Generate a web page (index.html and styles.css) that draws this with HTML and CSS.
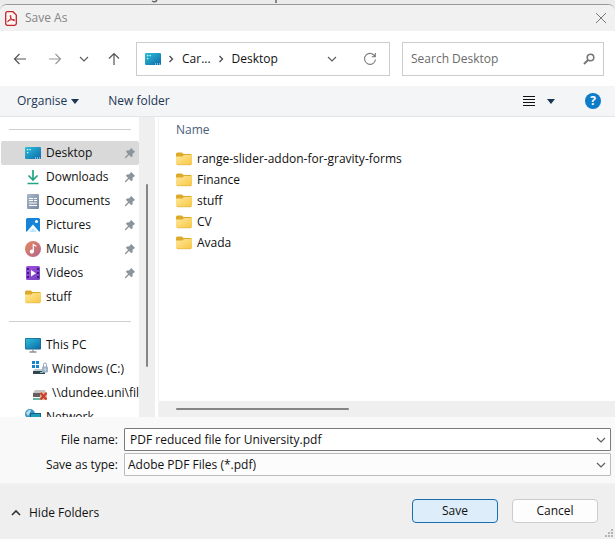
FILE: index.html
```
<!DOCTYPE html>
<html lang="en">
<head>
    <meta charset="UTF-8">
    <meta name="viewport" content="width=device-width, initial-scale=1.0">
    <title>Save As</title>
    <link rel="stylesheet" href="styles.css">
</head>
<body>
    <!-- shared icons -->
    <svg class="defs" width="0" height="0" aria-hidden="true">
        <defs>
            <linearGradient id="gBlue" x1="0" y1="0" x2="1" y2="1">
                <stop offset="0" stop-color="#2fc0da"/><stop offset="1" stop-color="#0c69a8"/>
            </linearGradient>
            <linearGradient id="gFolder" x1="0" y1="0" x2="1" y2="1">
                <stop offset="0" stop-color="#ffe79a"/><stop offset="1" stop-color="#f7c744"/>
            </linearGradient>
            <linearGradient id="gMusic" x1="0" y1="0" x2="1" y2="1">
                <stop offset="0" stop-color="#e58a5c"/><stop offset="1" stop-color="#b3638f"/>
            </linearGradient>
            <linearGradient id="gVideo" x1="0" y1="0" x2="1" y2="1">
                <stop offset="0" stop-color="#a04fe0"/><stop offset="1" stop-color="#7442bd"/>
            </linearGradient>
            <linearGradient id="gDoc" x1="0" y1="0" x2="1" y2="1">
                <stop offset="0" stop-color="#a9b8ca"/><stop offset="1" stop-color="#7488a2"/>
            </linearGradient>
            <symbol id="desktop" viewBox="0 0 16 16">
                <rect y="2" width="16" height="12" rx="1" fill="url(#gBlue)"/>
                <path d="M2 4h1.300v1.300H2zM2 7h1.300v1.300H2zM4.500 4h1.300v1.300H4.500z" fill="#d9f6ff"/>
                <path d="M10 13h1M12 13h1M14 13h1" stroke="#d9f6ff"/>
            </symbol>
            <symbol id="folder" viewBox="0 0 16 16">
                <path d="M0 3Q0 1.500 1.500 1.500h4.300l1.700 1.500H14.500Q16 3 16 4.500v4H0z" fill="#dda929"/>
                <path d="M0 5.500h6.500L8 4h7q1 0 1 1v7.500q0 1.500-1.500 1.500h-13Q0 14 0 12.500z" fill="url(#gFolder)"/>
                <path d="M1 13.800h14" stroke="#e3b23a" stroke-width=".6"/>
            </symbol>
            <symbol id="pin" viewBox="0 0 12 12">
                <path d="M7.200 1L11 4.800 10 5.800 8.800 6.600 8.500 9.200 7.300 10.200 5 7.900 1.800 11.200 1 11 .9 10.300 4.100 7 1.900 4.700 3 3.600 5.500 3.300 6.300 2z" fill="#8d959c"/>
            </symbol>
            <symbol id="chevron" viewBox="0 0 10 10">
                <path d="M1 3l4 4 4-4" fill="none" stroke="#5e5e5e" stroke-width="1.200"/>
            </symbol>
            <symbol id="crumb" viewBox="0 0 6 8">
                <path d="M1.500 1l3 3-3 3" fill="none" stroke="#4a4a55" stroke-width="1.300"/>
            </symbol>
        </defs>
    </svg>

    <div class="backdrop">
        <svg width="290" height="4" viewBox="0 0 290 4" fill="none" aria-hidden="true">
            <path d="M152 1q3 2 5-1M276 0v3" stroke="#666" stroke-width="1.500"/>
        </svg>
    </div>

    <form class="dialog">
        <div class="titlebar">
            <svg class="pdf-icon" viewBox="0 0 12 15" aria-hidden="true">
                <path d="M2.500.7H8L11.300 4v8.500q0 1.800-1.800 1.800h-7Q.7 14.300.7 12.500v-10Q.7.7 2.500.7z" fill="#fff5f4" stroke="#c0282d" stroke-width="1.300"/>
                <path d="M2.700 10.700C4.500 9.800 6.200 7 5.900 4.700 5.800 4 5 4.500 5.200 5.300 5.700 7.700 7.500 9.500 9.300 9.600c.8 0 .6-1-.2-1C6.700 8.500 4.600 9 2.900 9.900c-.5.300-.6.800-.2.800z" fill="none" stroke="#c0282d" stroke-width="1"/>
            </svg>
            <span class="title">Save As</span>
            <button type="button" class="plain close" aria-label="Close">
                <svg width="12" height="12" viewBox="0 0 12 12"><path d="M1 1l10 10M11 1L1 11" stroke="#777" fill="none"/></svg>
            </button>
        </div>

        <div class="navbar">
            <div class="arrows">
                <button type="button" class="plain back" aria-label="Back">
                    <svg width="14" height="14" viewBox="0 0 14 14"><path d="M13 7H2M6.500 2L1.500 7l5 5" fill="none" stroke="#555" stroke-width="1.200"/></svg>
                </button>
                <button type="button" class="plain" aria-label="Forward">
                    <svg width="14" height="14" viewBox="0 0 14 14"><path d="M1 7h11M7.500 2l5 5-5 5" fill="none" stroke="#999" stroke-width="1.200"/></svg>
                </button>
                <button type="button" class="plain" aria-label="Recent locations">
                    <svg width="10" height="10"><use href="#chevron"/></svg>
                </button>
                <button type="button" class="plain" aria-label="Up">
                    <svg width="14" height="14" viewBox="0 0 14 14"><path d="M7 13V2M2 6.500l5-5 5 5" fill="none" stroke="#555" stroke-width="1.200"/></svg>
                </button>
            </div>
            <div class="address">
                <svg width="16" height="16"><use href="#desktop"/></svg>
                <svg class="sep" width="6" height="8"><use href="#crumb"/></svg>
                <button type="button" class="plain">Car...</button>
                <svg class="sep" width="6" height="8"><use href="#crumb"/></svg>
                <button type="button" class="plain">Desktop</button>
                <button type="button" class="plain history" aria-label="Previous locations">
                    <svg width="10" height="10"><use href="#chevron"/></svg>
                </button>
                <button type="button" class="plain" aria-label="Refresh">
                    <svg width="14" height="14" viewBox="0 0 14 14"><path d="M12 4.500A5.500 5.500 0 1 0 12.500 7.500M12.300 1v3.700H8.700" fill="none" stroke="#777" stroke-width="1.100"/></svg>
                </button>
            </div>
            <div class="search">
                <input type="text" placeholder="Search Desktop" aria-label="Search Desktop">
                <svg width="12" height="12" viewBox="0 0 12 12" aria-hidden="true"><circle cx="7.500" cy="4.500" r="3.300" fill="none" stroke="#777" stroke-width="1.600"/><path d="M5 7L1 11" stroke="#777" stroke-width="2"/></svg>
            </div>
        </div>

        <div class="toolbar">
            <button type="button" class="plain">Organise <svg width="8" height="5" viewBox="0 0 8 5"><path d="M0 0h8L4 5z" fill="#1e3553"/></svg></button>
            <button type="button" class="plain new-folder">New folder</button>
            <button type="button" class="plain view" aria-label="Change your view">
                <svg width="12" height="12" viewBox="0 0 12 12"><path d="M0 1.500h12M0 4.500h12M0 7.500h12M0 10.500h12" stroke="#111"/></svg>
                <svg width="8" height="5" viewBox="0 0 8 5"><path d="M0 0h8L4 5z" fill="#1e3553"/></svg>
            </button>
            <button type="button" class="help" aria-label="Help">?</button>
        </div>

        <div class="browser">
            <nav class="sidebar">
                <ul>
                    <li class="divider"></li>
                    <li class="selected"><a href="#"><svg><use href="#desktop"/></svg>Desktop</a><svg class="pin"><use href="#pin"/></svg></li>
                    <li><a href="#"><svg viewBox="0 0 16 16"><path d="M8 1v10M3.500 6.500L8 11l4.500-4.500M2.500 14.500h11" fill="none" stroke="#22a582" stroke-width="1.700"/></svg>Downloads</a><svg class="pin"><use href="#pin"/></svg></li>
                    <li><a href="#"><svg viewBox="0 0 16 16"><rect x="2" y="1" width="12" height="15" rx="1" fill="url(#gDoc)"/><path d="M4 5.500h4M4 7.500h4M4 10h8M4 12.500h8" stroke="#fff"/><path d="M9 5.500h3M9 7.500h3" stroke="#fff"/></svg>Documents</a><svg class="pin"><use href="#pin"/></svg></li>
                    <li><a href="#"><svg viewBox="0 0 16 16"><rect x="1" y="1" width="14" height="14" rx="1.500" fill="#1783d8"/><path d="M1.500 15L8 7.500l6.500 7.500z" fill="#f2fbff"/><path d="M4.500 15L8 11l3.500 4z" fill="#bce5fb"/><circle cx="11.500" cy="4.500" r="1.500" fill="#fff"/></svg>Pictures</a><svg class="pin"><use href="#pin"/></svg></li>
                    <li><a href="#"><svg viewBox="0 0 16 16"><circle cx="8" cy="8" r="8" fill="url(#gMusic)"/><path d="M8.300 10.500V3.500l3 1.700" fill="none" stroke="#fff" stroke-width="1.300"/><circle cx="6.800" cy="10.600" r="2.100" fill="#fff"/></svg>Music</a><svg class="pin"><use href="#pin"/></svg></li>
                    <li><a href="#"><svg viewBox="0 0 16 16"><rect x="1" y="1" width="14" height="14" rx="1.500" fill="url(#gVideo)"/><path d="M3 3v11M13 3v11" stroke="#3b1d75" stroke-width="2" stroke-dasharray="2 2"/><path d="M6 5l5 3.200-5 3.200z" fill="#fff"/></svg>Videos</a><svg class="pin"><use href="#pin"/></svg></li>
                    <li><a href="#"><svg><use href="#folder"/></svg>stuff</a></li>
                    <li class="divider"></li>
                    <li><a href="#"><svg viewBox="0 0 16 16"><rect y="1" width="16" height="11.500" rx="1" fill="#17638c"/><rect x=".7" y="1.700" width="14.600" height="10" fill="url(#gBlue)"/><path d="M8 12v3M4.500 15h7" stroke="#8496a3" stroke-width="1.300"/></svg>This PC</a></li>
                    <li class="child"><a href="#"><svg viewBox="0 0 16 16"><path d="M0 0h3v3H0zM4 0h3v3H4zM0 4h3v3H0zM4 4h3v3H4z" fill="#1684cf"/><path d="M3 8h9l1 2H1z" fill="#c1c9cf"/><path d="M1 10h12v3H1z" fill="#34434e"/><path d="M8 11.500h3" stroke="#62d5e6"/><path d="M11.500 6V3.500q0-1.500 1.500-1.500t1.500 1.500V6" fill="none" stroke="#8ca6bb"/><rect x="10" y="5.500" width="6" height="6" rx="1" fill="#9eb4c6"/><path d="M13 7.500v2" stroke="#fff"/></svg>Windows (C:)</a></li>
                    <li class="child"><a href="#"><svg viewBox="0 0 16 16"><path d="M3 5h10l1 3H1z" fill="#c7c3c0"/><path d="M1 8h13v4H1z" fill="#665f5d"/><path d="M1 14h8" stroke="#3d9d85" stroke-width="1.500"/><rect x="8" y="7" width="7" height="8" fill="#dfb0a3"/><path d="M8.500 8l6 6.500M14.500 8l-6 6.500" stroke="#c93e22" stroke-width="2"/></svg>\\dundee.uni\fil</a></li>
                    <li><a href="#"><svg viewBox="0 0 16 16"><circle cx="5" cy="5" r="5" fill="#3b94c5"/><path d="M1 4q3-4 5-3L5 4 3 7zM6 5l3-1v3z" fill="#b9dfea"/><rect x="5" y="4" width="11" height="8" fill="#155f85"/><rect x="6" y="5" width="9" height="6" fill="#1d9dba"/></svg>Network</a></li>
                </ul>
                <div class="vscroll"><div class="thumb"></div></div>
            </nav>

            <div class="files">
                <table>
                    <thead>
                        <tr><th>Name</th></tr>
                    </thead>
                    <tbody>
                        <tr><td><svg width="16" height="16"><use href="#folder"/></svg>range-slider-addon-for-gravity-forms</td></tr>
                        <tr><td><svg width="16" height="16"><use href="#folder"/></svg>Finance</td></tr>
                        <tr><td><svg width="16" height="16"><use href="#folder"/></svg>stuff</td></tr>
                        <tr><td><svg width="16" height="16"><use href="#folder"/></svg>CV</td></tr>
                        <tr><td><svg width="16" height="16"><use href="#folder"/></svg>Avada</td></tr>
                    </tbody>
                </table>
                <div class="hscroll"><div class="thumb"></div></div>
            </div>
        </div>

        <div class="fields">
            <label for="fileName">File name:</label>
            <div class="combo name">
                <input type="text" id="fileName" value="PDF reduced file for University.pdf">
                <svg width="10" height="10"><use href="#chevron"/></svg>
            </div>
            <label for="fileType">Save as type:</label>
            <div class="combo">
                <select id="fileType">
                    <option>Adobe PDF Files (*.pdf)</option>
                </select>
                <svg width="10" height="10"><use href="#chevron"/></svg>
            </div>
        </div>

        <div class="footer">
            <button type="button" class="plain hide-folders">
                <svg width="10" height="10" viewBox="0 0 10 10"><path d="M1 7l4-4 4 4" fill="none" stroke="#333" stroke-width="1.600"/></svg>
                Hide Folders
            </button>
            <button type="submit" class="btn primary">Save</button>
            <button type="button" class="btn">Cancel</button>
            <svg class="grip" width="10" height="10" viewBox="0 0 10 10" aria-hidden="true"><path d="M6 0h2v2H6zM3 3h2v2H3zM6 3h2v2H6zM0 6h2v2H0zM3 6h2v2H3zM6 6h2v2H6z" fill="#b5b5b5"/></svg>
        </div>
    </form>
</body>
</html>
```
FILE: styles.css
```
* {
    box-sizing: border-box;
}
body {
    margin: 0;
    height: 100vh;
    display: flex;
    flex-direction: column;
    overflow: hidden;
    background: #ebebeb;
    font-family: "Open Sans", "Noto Sans", sans-serif;
    font-size: 12px;
    line-height: 16px;
    color: #111;
}
svg {
    display: block;
    flex: none;
}
.defs {
    position: absolute;
}
button, input, select {
    font: inherit;
    color: inherit;
}
.plain {
    display: flex;
    align-items: center;
    padding: 0;
    border: none;
    background: none;
    cursor: pointer;
}
.backdrop {
    height: 4px;
    flex: none;
}
.dialog {
    flex: 1;
    min-height: 0;
    display: flex;
    flex-direction: column;
    border-top: 1px solid #999;
    border-radius: 7px 7px 0 0;
    background: #fff;
    overflow: hidden;
}

/* title bar */
.titlebar {
    display: flex;
    align-items: center;
    height: 26px;
    flex: none;
    padding: 0 8px 0 5px;
    background: #f1f1f1;
}
.pdf-icon {
    width: 12px;
    height: 15px;
}
.title {
    margin-left: 8px;
    color: #858585;
}
.close {
    margin-left: auto;
}

/* navigation */
.navbar {
    display: flex;
    align-items: center;
    gap: 12px;
    height: 55px;
    flex: none;
    padding: 0 11px 0 13px;
}
.arrows {
    display: flex;
    align-items: center;
    justify-content: space-between;
    width: 108px;
}
.back {
    margin-right: 3px;
}
.address, .search {
    display: flex;
    align-items: center;
    height: 34px;
    border: 1px solid #ccc;
}
.address {
    flex: 1;
    padding: 0 12px 0 8px;
    margin-left: 3px;
}
.sep {
    margin: 0 8px 0 7px;
}
.history {
    margin: 0 26px 0 auto;
}
.search {
    width: 202px;
    padding: 0 8px;
}
.search input {
    flex: 1;
    min-width: 0;
    padding: 0;
    border: none;
    outline: none;
    background: none;
}
.search input::placeholder {
    color: #6a6a6a;
}

/* toolbar */
.toolbar {
    display: flex;
    align-items: center;
    height: 31px;
    flex: none;
    padding: 0 14px 0 17px;
    background: #f3f5f7;
    border-bottom: 1px solid #e3e6e8;
    color: #1e3553;
}
.toolbar .plain {
    gap: 4px;
}
.toolbar .new-folder {
    margin-left: 29px;
}
.toolbar .view {
    gap: 12px;
    margin-left: auto;
}
.help {
    width: 16px;
    height: 16px;
    margin-left: 30px;
    padding: 0;
    border: none;
    border-radius: 50%;
    background: #0c7bc8;
    color: #fff;
    font-weight: bold;
}

/* folder tree and file list */
.browser {
    flex: 1;
    min-height: 0;
    display: flex;
}
.sidebar {
    display: flex;
    width: 155px;
    overflow: hidden;
}
.sidebar ul {
    flex: 1;
    min-width: 0;
    margin: 0;
    padding: 0 0 0 1px;
    list-style: none;
}
.sidebar li {
    display: flex;
    align-items: center;
    height: 24px;
    padding-left: 24px;
    border-radius: 2px;
}
.sidebar li.child {
    padding-left: 31px;
}
.sidebar li.selected {
    background: #d9d9d9;
}
.sidebar li.divider {
    padding: 0 8px;
}
.divider::before {
    content: "";
    flex: 1;
    height: 1px;
    background: #d0d0d0;
}
.sidebar a {
    display: flex;
    align-items: center;
    flex: 1;
    min-width: 0;
    gap: 5px;
    overflow: hidden;
    color: inherit;
    text-decoration: none;
    white-space: nowrap;
}
.sidebar .child a {
    gap: 4px;
}
.sidebar a svg {
    width: 16px;
    height: 16px;
}
.sidebar .pin {
    width: 12px;
    height: 12px;
    margin-right: 3px;
}
.vscroll {
    width: 16px;
    padding: 67px 7px 50px;
    background: #efefef;
}
.thumb {
    background: #858585;
    border-radius: 1px;
}
.vscroll .thumb {
    height: 100%;
}
.files {
    flex: 1;
    min-width: 0;
    display: flex;
    flex-direction: column;
    margin-left: 3px;
    border-left: 1px solid #f3f3f3;
}
.files table {
    border-collapse: collapse;
    margin: 0 17px;
}
.files th {
    height: 31px;
    padding: 0;
    padding-top: 5px;
    vertical-align: top;
    text-align: left;
    font-weight: normal;
    color: #4c607a;
}
.files td {
    height: 21px;
    padding: 0;
}
.files td svg {
    float: left;
    margin-right: 5px;
}
.hscroll {
    margin-top: auto;
    height: 16px;
    padding: 7px 17px;
    background: #efefef;
}
.hscroll .thumb {
    width: 41%;
    height: 2px;
}

/* file name and type */
.fields {
    display: grid;
    grid-template-columns: 113px 1fr;
    gap: 2px 6px;
    align-items: center;
    flex: none;
    padding: 11px 4px 7px 5px;
    background: #f9f9f9;
}
.fields label {
    text-align: right;
}
.combo {
    display: flex;
    align-items: center;
    height: 23px;
    padding-right: 4px;
    border: 1px solid #bbb;
    border-radius: 1px;
    background: #fcfcfc;
}
.combo.name {
    border-color: #7a7a7a;
    background: #fff;
}
.combo input, .combo select {
    flex: 1;
    min-width: 0;
    padding: 0 0 0 3px;
    border: none;
    outline: none;
    background: none;
    appearance: none;
}
.combo input {
    padding-left: 5px;
}

/* footer */
.footer {
    position: relative;
    display: flex;
    align-items: center;
    gap: 14px;
    height: 56px;
    flex: none;
    padding: 0 17px 2px 11px;
    border-top: 1px solid #f3f3f3;
    background: #efefef;
}
.hide-folders {
    gap: 8px;
    margin-right: auto;
    padding-top: 5px;
}
.btn {
    width: 86px;
    height: 24px;
    padding: 0;
    border: 1px solid #ccc;
    border-radius: 4px;
    background: #fdfdfd;
    cursor: pointer;
}
.btn.primary {
    border-color: #1a6fb0;
    background: #ddedf9;
}
.grip {
    position: absolute;
    right: 0;
    bottom: 0;
}
```
